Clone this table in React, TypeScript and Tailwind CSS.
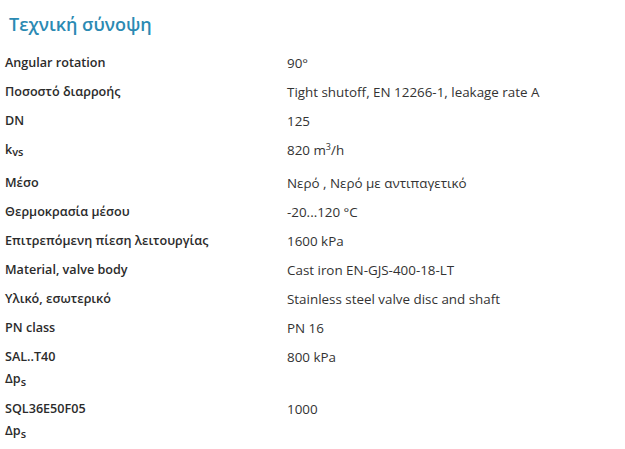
const rows: { label: React.ReactNode; value: React.ReactNode; tall?: boolean; two?: boolean }[] = [
  { label: 'Angular rotation', value: '90°' },
  { label: 'Ποσοστό διαρροής', value: 'Tight shutoff, EN 12266-1, leakage rate A' },
  { label: 'DN', value: '125' },
  {
    label: (
      <>
        k<sub className="text-[11px]">vs</sub>
      </>
    ),
    value: (
      <>
        820 m<sup className="text-[9px]">3</sup>/h
      </>
    ),
    tall: true,
  },
  { label: 'Μέσο', value: 'Νερό , Νερό με αντιπαγετικό' },
  { label: 'Θερμοκρασία μέσου', value: '-20...120 °C' },
  { label: 'Επιτρεπόμενη πίεση λειτουργίας', value: '1600 kPa' },
  { label: 'Material, valve body', value: 'Cast iron EN-GJS-400-18-LT' },
  { label: 'Υλικό, εσωτερικό', value: 'Stainless steel valve disc and shaft' },
  { label: 'PN class', value: 'PN 16' },
  {
    label: (
      <>
        SAL..T40
        <br />
        Δp<sub className="text-[11px]">s</sub>
      </>
    ),
    value: '800 kPa',
    two: true,
  },
  {
    label: (
      <>
        SQL36E50F05
        <br />
        Δp<sub className="text-[11px]">s</sub>
      </>
    ),
    value: '1000',
    two: true,
  },
];

export default function App() {
  return (
    <div className="min-h-screen bg-white pt-[11px] text-[#333] font-['Open_Sans','Noto_Sans',sans-serif]">
      <h2 className="pl-[9px] text-[18px] font-semibold leading-[26px] text-[#2b8ab3]">Τεχνική σύνοψη</h2>
      <div className="mt-[11px] grid grid-cols-[282px_1fr] pl-[5px] leading-[22px]">
        {rows.map((row, i) => {
          const h = row.tall ? 'h-[33px]' : row.two ? 'h-[52px]' : 'h-[29px]';
          const pad = row.two ? 'pt-[4px]' : 'pt-[3.5px]';
          return (
            <div key={i} className="contents">
              <div className={`${h} ${pad} text-[12.6px] font-semibold text-[#2b2b2b]`}>{row.label}</div>
              <div className={`${h} ${pad} text-[13.4px]`}>{row.value}</div>
            </div>
          );
        })}
      </div>
    </div>
  );
}
